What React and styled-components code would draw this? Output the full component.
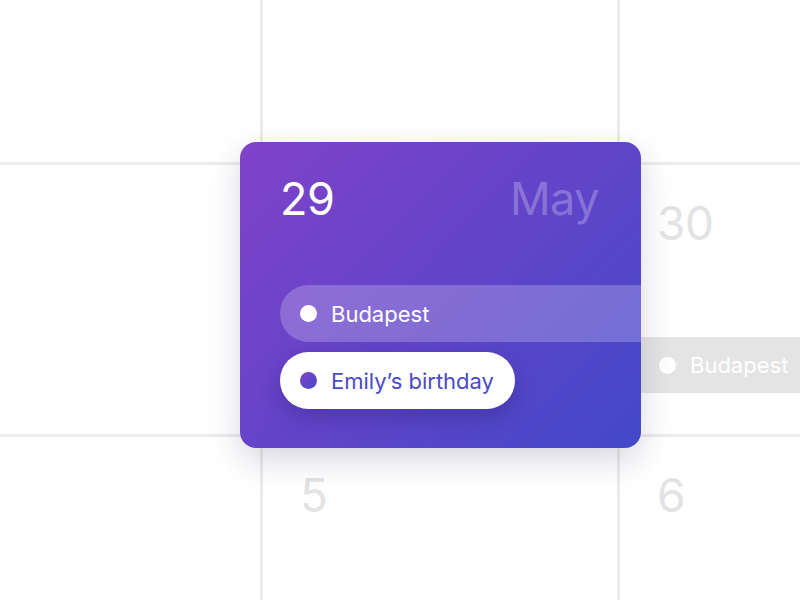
import React from "react";
import styled, { createGlobalStyle } from "styled-components";

const GlobalStyle = createGlobalStyle`
  html, body {
    margin: 0;
    padding: 0;
    background: #ffffff;
    font-family: Inter, "Noto Sans", "Liberation Sans", sans-serif;
    -webkit-font-smoothing: antialiased;
  }
  #root {
    width: 800px;
    height: 600px;
    overflow: hidden;
  }
`;

const Page = styled.div`
  position: relative;
  width: 800px;
  height: 600px;
  overflow: hidden;
`;

const MonthGrid = styled.div`
  display: grid;
  grid-template-columns: 260px 354px 354px;
  grid-template-rows: 162px 269px 269px;
  gap: 3px;
  background: #ebebeb;
  width: 974px;
`;

const Cell = styled.div`
  position: relative;
  background: #ffffff;
  display: flex;
  flex-direction: column;
  padding: 35px 0 0 37px;
`;

const DayNumber = styled.span`
  font-size: 46px;
  line-height: 1;
  font-weight: 400;
  color: #e3e3e3;
  letter-spacing: -0.5px;
`;

const GreyEvent = styled.div`
  position: absolute;
  left: 0;
  right: 0;
  top: 172px;
  height: 56px;
  background: #e4e4e4;
  display: flex;
  align-items: center;
  gap: 14px;
  padding-left: 39px;
  color: #ffffff;
  font-size: 22px;
`;

const Popover = styled.div`
  position: absolute;
  left: 240px;
  top: 142px;
  width: 401px;
  height: 306px;
  border-radius: 16px;
  overflow: hidden;
  background: linear-gradient(135deg, #8042c9 0%, #6244c9 50%, #4349c9 100%);
  box-shadow: 0 12px 32px rgba(40, 30, 80, 0.18);
  display: flex;
  flex-direction: column;
  padding: 34px 42px 0 40px;
  box-sizing: border-box;
`;

const Header = styled.div`
  display: flex;
  justify-content: space-between;
  align-items: baseline;
  font-size: 45px;
  line-height: 1;
  letter-spacing: -0.5px;
`;

const DateLabel = styled.span`
  color: ${({ $muted }) => ($muted ? "rgba(255,255,255,0.26)" : "#ffffff")};
`;

const EventList = styled.div`
  display: flex;
  flex-direction: column;
  gap: 10px;
  margin-top: 64px;
`;

const EventPill = styled.div`
  display: flex;
  align-items: center;
  gap: 14px;
  height: 57px;
  box-sizing: border-box;
  padding: 0 21px 0 20px;
  border-radius: 29px;
  font-size: 22px;
  align-self: flex-start;
  background: ${({ $active }) => ($active ? "#ffffff" : "rgba(255,255,255,0.22)")};
  color: ${({ $active }) => ($active ? "#4b4ac6" : "#ffffff")};
  box-shadow: ${({ $active }) => ($active ? "0 8px 22px rgba(30,20,90,0.28)" : "none")};
  width: ${({ $wide }) => ($wide ? "420px" : "auto")};
`;

const Dot = styled.span`
  width: 17px;
  height: 17px;
  border-radius: 50%;
  flex-shrink: 0;
  background: ${({ $color }) =>
    $color === "purple" ? "linear-gradient(135deg, #8042c9, #4a49c9)" : "#ffffff"};
`;

const days = [
  [null, null, null],
  [null, 29, 30],
  [null, 5, 6],
];

export default function App() {
  return (
    <>
      <GlobalStyle />
      <Page>
        <MonthGrid>
          {days.map((row, r) =>
            row.map((day, c) => (
              <Cell key={`${r}-${c}`}>
                {day && day !== 29 && <DayNumber>{day}</DayNumber>}
                {day === 30 && (
                  <GreyEvent>
                    <Dot />
                    Budapest
                  </GreyEvent>
                )}
              </Cell>
            ))
          )}
        </MonthGrid>

        <Popover>
          <Header>
            <DateLabel>29</DateLabel>
            <DateLabel $muted>May</DateLabel>
          </Header>
          <EventList>
            <EventPill $wide>
              <Dot />
              Budapest
            </EventPill>
            <EventPill $active>
              <Dot $color="purple" />
              Emily’s birthday
            </EventPill>
          </EventList>
        </Popover>
      </Page>
    </>
  );
}
